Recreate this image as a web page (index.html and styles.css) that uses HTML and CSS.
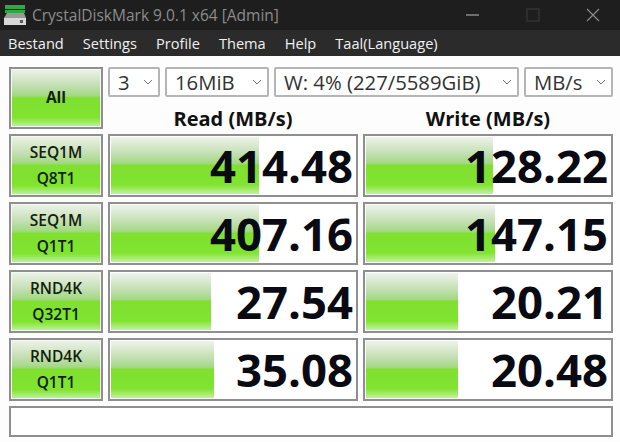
FILE: index.html
```html
<!DOCTYPE html>
<html lang="en">
<head>
    <meta charset="UTF-8">
    <title>CrystalDiskMark</title>
    <link rel="stylesheet" href="styles.css">
</head>
<body>
    <div class="titlebar">
        <svg class="app-icon" width="24" height="24" viewBox="0 0 24 24">
            <rect x="3" y="2" width="20" height="4" fill="#2fa84a"/>
            <rect x="3" y="7" width="20" height="3" fill="#2fa84a"/>
            <path d="M5 10h17l2 5H2z" fill="#9a9a9a"/>
            <rect x="2" y="15" width="22" height="7" fill="#d8d8d8"/>
            <rect x="18" y="17" width="3" height="3" fill="#5a5a5a"/>
        </svg>
        <span class="app-title">CrystalDiskMark 9.0.1 x64 [Admin]</span>
        <div class="win-buttons">
            <svg width="14" height="14" viewBox="0 0 14 14"><path d="M0 7h13" stroke="#8a8a8a" stroke-width="1.5"/></svg>
            <svg width="14" height="14" viewBox="0 0 14 14"><rect x="1" y="1" width="12" height="12" fill="none" stroke="#3c3c3c"/></svg>
            <svg width="14" height="14" viewBox="0 0 14 14"><path d="M1 1l12 12M13 1L1 13" stroke="#8a8a8a" stroke-width="1.2"/></svg>
        </div>
    </div>
    <div class="menubar">
        <span>Bestand</span>
        <span>Settings</span>
        <span>Profile</span>
        <span>Thema</span>
        <span>Help</span>
        <span>Taal(Language)</span>
    </div>
    <div class="main">
        <div class="grid">
            <div class="btn btn-all">All</div>
            <div class="top-right">
                <div class="selects">
                    <div class="select sel-count">3<svg class="chev" width="10" height="6" viewBox="0 0 10 6"><path d="M1 1l4 4 4-4" fill="none" stroke="#777"/></svg></div>
                    <div class="select sel-size">16MiB<svg class="chev" width="10" height="6" viewBox="0 0 10 6"><path d="M1 1l4 4 4-4" fill="none" stroke="#777"/></svg></div>
                    <div class="select sel-drive">W: 4% (227/5589GiB)<svg class="chev" width="10" height="6" viewBox="0 0 10 6"><path d="M1 1l4 4 4-4" fill="none" stroke="#777"/></svg></div>
                    <div class="select sel-unit">MB/s<svg class="chev" width="10" height="6" viewBox="0 0 10 6"><path d="M1 1l4 4 4-4" fill="none" stroke="#777"/></svg></div>
                </div>
                <div class="heads">
                    <div>Read (MB/s)</div>
                    <div>Write (MB/s)</div>
                </div>
            </div>

            <div class="btn">SEQ1M<br>Q8T1</div>
            <div class="meter"><div class="fill" style="width: 60%"></div><span>414.48</span></div>
            <div class="meter"><div class="fill" style="width: 51.5%"></div><span>128.22</span></div>

            <div class="btn">SEQ1M<br>Q1T1</div>
            <div class="meter"><div class="fill" style="width: 60%"></div><span>407.16</span></div>
            <div class="meter"><div class="fill" style="width: 52.6%"></div><span>147.15</span></div>

            <div class="btn">RND4K<br>Q32T1</div>
            <div class="meter"><div class="fill" style="width: 40.5%"></div><span>27.54</span></div>
            <div class="meter"><div class="fill" style="width: 37.5%"></div><span>20.21</span></div>

            <div class="btn">RND4K<br>Q1T1</div>
            <div class="meter"><div class="fill" style="width: 42%"></div><span>35.08</span></div>
            <div class="meter"><div class="fill" style="width: 37.5%"></div><span>20.48</span></div>

            <div class="message"></div>
        </div>
    </div>
</body>
</html>
```
FILE: styles.css
```css
/* General */
html, body {
    margin: 0;
    padding: 0;
    height: 442px;
    overflow: hidden;
    background: #fdfdfd;
    font-family: 'Open Sans', 'Noto Sans', sans-serif;
}

/* Title bar */
.titlebar {
    height: 30px;
    background: #1e1e1e;
    display: flex;
    align-items: center;
    padding-left: 2px;
    box-sizing: border-box;
}

.app-icon {
    margin-right: 6px;
}

.app-title {
    color: #8c8c8c;
    font-size: 15.5px;
}

.win-buttons {
    margin-left: auto;
    display: flex;
    gap: 46px;
    padding-right: 20px;
}

/* Menu */
.menubar {
    height: 26px;
    background: #2b2b2b;
    color: #f0f0f0;
    font-size: 14.6px;
    display: flex;
    align-items: center;
    gap: 19px;
    padding-left: 8px;
}

/* Main grid */
.main {
    padding: 11px 7px 0 9px;
}

.grid {
    display: grid;
    grid-template-columns: 94px 250px 250px;
    grid-template-rows: 62px repeat(4, 63px) 31px;
    column-gap: 5px;
    row-gap: 5px;
}

.btn {
    border: 2px solid #8f8f8f;
    box-sizing: border-box;
    background: linear-gradient(#eef3ea 0%, #c4e0b4 28%, #a4d884 46%, #80e030 50%, #80e430 84%, #c4f2a0 100%);
    box-shadow: inset 0 0 0 1px #f4f8f0;
    display: flex;
    align-items: center;
    justify-content: center;
    text-align: center;
    font-size: 15.5px;
    font-weight: 600;
    line-height: 26px;
    padding-bottom: 2px;
    color: #12200e;
}

.btn-all {
    font-weight: 700;
}

.top-right {
    grid-column: 2 / 4;
}

.selects {
    display: flex;
    gap: 5px;
    height: 30px;
}

.select {
    border: 2px solid #b5b5b5;
    border-radius: 2px;
    box-sizing: border-box;
    background: #fff;
    font-size: 20.3px;
    color: #333;
    display: flex;
    align-items: center;
    justify-content: space-between;
    padding: 0 5px 0 8px;
}

.sel-count { width: 52px; }
.sel-size { width: 104px; }
.sel-drive { width: 245px; }
.sel-unit { width: 89px; }

.heads {
    display: grid;
    grid-template-columns: 250px 250px;
    column-gap: 5px;
    text-align: center;
    font-size: 20px;
    font-weight: 700;
    color: #111;
    line-height: 26px;
    padding-top: 9px;
}

.meter {
    position: relative;
    border: 2px solid #8f8f8f;
    box-sizing: border-box;
    background: #fff;
    text-align: right;
}

.fill {
    position: absolute;
    top: 1px;
    left: 1px;
    bottom: 1px;
    background: linear-gradient(#eef3ea 0%, #c4e0b4 28%, #a4d884 46%, #80e030 50%, #80e430 84%, #c4f2a0 100%);
}

.meter span {
    position: relative;
    font-size: 45.5px;
    font-weight: 700;
    line-height: 59px;
    padding-right: 3px;
    color: #0a0a12;
}

.message {
    grid-column: 1 / 4;
    border: 2px solid #8f8f8f;
    box-sizing: border-box;
    background: #fff;
}
```
